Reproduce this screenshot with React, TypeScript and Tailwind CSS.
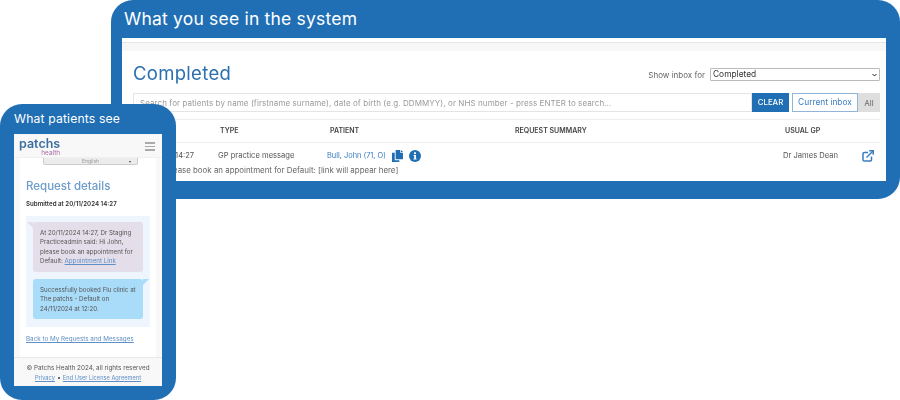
import React from "react";

const font = { fontFamily: '"Inter","Liberation Sans",sans-serif' };

function CopyIcon() {
  return (
    <svg width="11" height="12" viewBox="0 0 12 13" fill="#206fb5">
      <path d="M4 0h5v3h3v7H4z" />
      <path d="M0 3h3v8h5v2H0z" />
      <path d="M9.800 0 12 2.200H9.800z" />
    </svg>
  );
}

function InfoIcon() {
  return (
    <svg width="12" height="12" viewBox="0 0 12 12">
      <circle cx="6" cy="6" r="6" fill="#206fb5" />
      <rect x="5" y="2.300" width="2" height="1.800" fill="#fff" />
      <path d="M4.600 5h2.400v3.600h.6v1H4.500v-1h.7V6h-.6z" fill="#fff" />
    </svg>
  );
}

function ExternalIcon() {
  return (
    <svg width="12" height="12" viewBox="0 0 12 12" fill="none" stroke="#3a7cc0" strokeWidth="1.500">
      <path d="M9.500 6.500v3.200a1.300 1.300 0 0 1-1.300 1.300H2.300A1.300 1.300 0 0 1 1 9.700V3.800a1.300 1.300 0 0 1 1.300-1.300H6" />
      <path d="M4.500 7.500 11 1" />
      <path d="M7.200 .8h4v4" />
    </svg>
  );
}

function SystemWindow() {
  return (
    <div className="absolute left-[111px] top-0 w-[789px] h-[199px] bg-[#206fb5] rounded-[22px] flex flex-col pl-[11px] pr-[14px] pb-[18px]">
      <div className="h-[38px] pl-[2px] flex items-center text-white text-[17.5px] tracking-[0.2px]">What you see in the system</div>
      <div className="flex-1 bg-white flex flex-col text-[#555] text-[7.500px] blur-[0.3px]">
        <div className="h-[5px] border-b border-[#e6e6e6]" />
        <div className="h-[8px] bg-[#f7f7f7] shrink-0" />
        <div className="flex-1 pl-[11px] pr-[6px] flex flex-col">
          <div className="h-[42px] flex items-center justify-between pt-[5px]">
            <div className="text-[#2b6fb0] text-[18.500px] tracking-[0.3px] -mt-[2px]">Completed</div>
            <div className="flex items-center gap-[5px]">
              <span className="text-[#666] text-[8px]">Show inbox for</span>
              <div className="w-[170px] h-[13px] border border-[#bbb] rounded-[1px] flex items-center justify-between px-[2px] text-[#333] text-[8.400px]">
                <span>Completed</span>
                <svg width="5" height="4" viewBox="0 0 5 4" fill="none" stroke="#222" strokeWidth="1"><path d="M.5 1l2 2 2-2" /></svg>
              </div>
            </div>
          </div>
          <div className="h-[19px] flex items-stretch">
            <div className="flex-1 border border-[#e4e4e4] flex items-center pl-[6px] text-[#9a9a9a] text-[8px] tracking-[0.08px] whitespace-nowrap">
              Search for patients by name (firstname surname), date of birth (e.g. DDMMYY), or NHS number - press ENTER to search...
            </div>
            <div className="w-[37px] bg-[#206fb5] text-white flex items-center justify-center text-[7.800px] font-medium">CLEAR</div>
            <div className="ml-[3px] w-[66px] border border-[#8fb5d8] text-[#3a7cc0] flex items-center justify-center text-[8.400px]">Current inbox</div>
            <div className="w-[22px] bg-[#dedede] text-[#666] flex items-center justify-center text-[8px]">All</div>
          </div>
          <div className="mt-[7px] border-t border-[#eee] h-[24px] border-b grid grid-cols-[87px_110px_185px_270px_1fr] items-center text-[#444] font-semibold text-[7px]">
            <span>RECEIVED</span>
            <span>TYPE</span>
            <span>PATIENT</span>
            <span>REQUEST SUMMARY</span>
            <span>USUAL GP</span>
          </div>
          <div className="h-[24px] pt-[1px] grid grid-cols-[85px_109px_456px_79px_1fr] items-center text-[7.600px] text-[#555]">
            <span className="text-right pr-[24px] whitespace-nowrap">20/11/2024 14:27</span>
            <span>GP practice message</span>
            <span className="flex items-center gap-[6px] text-[#3a7cc0]">
              <span className="text-[7.400px]">Bull, John (71, O)</span>
              <CopyIcon />
              <InfoIcon />
            </span>
            <span>Dr James Dean</span>
            <ExternalIcon />
          </div>
          <div className="pl-[33px] text-[7.900px] leading-[7px] text-[#666] whitespace-nowrap">Please book an appointment for Default: [link will appear here]</div>
        </div>
      </div>
    </div>
  );
}

function PhoneWindow() {
  return (
    <div className="absolute left-0 top-[104px] w-[176px] h-[296px] bg-[#206fb5] rounded-[22px] flex flex-col px-[14px] pb-[14px]">
      <div className="h-[30px] flex items-center text-white text-[12.200px] tracking-[0.15px]">What patients see</div>
      <div className="flex-1 bg-[#f8f8f9] flex flex-col overflow-hidden blur-[0.45px]">
        <div className="h-[24px] shrink-0 flex items-start justify-between pl-[5px] pr-[7px] pt-[4px] bg-[#f8f8f9] border-b border-[#f0f0f0]">
          <div className="flex flex-col">
            <span className="text-[#3d6f9f] text-[12.500px] font-semibold leading-[12px]">patchs</span>
            <span className="text-[#a86ba8] text-[6.500px] leading-[6px] self-end">health</span>
          </div>
          <div className="flex flex-col gap-[2px] w-[10px] mt-[4px]">
            <div className="h-[1.500px] bg-[#aaa]" />
            <div className="h-[1.500px] bg-[#aaa]" />
            <div className="h-[1.500px] bg-[#aaa]" />
          </div>
        </div>
        <div className="mx-[6px] bg-white px-[6px] h-[199px] shrink-0 flex flex-col">
          <div className="ml-[17px] mr-[12px] h-[7px] bg-[#ececec] border border-t-0 border-[#ccc] rounded-b-[2px] flex items-center justify-center relative text-[5px] leading-[5px] text-[#999] overflow-hidden">
            <span className="absolute right-[6px] text-[#444] text-[4px]">▾</span>
            English
          </div>
          <div className="mt-[14px] text-[#6b9ccb] text-[11.500px] font-medium leading-[14px]">Request details</div>
          <div className="mt-[7px] text-[#333] text-[6.200px] font-semibold leading-[8px] whitespace-nowrap">Submitted at 20/11/2024 14:27</div>
          <div className="mt-[8px] bg-[#eff5fc] h-[111px] px-[7px] pt-[6px] flex flex-col gap-[7px] text-[#555] text-[6.200px] leading-[9.300px] whitespace-nowrap">
            <div className="relative bg-[#e4deea] rounded-[3px] h-[50px] px-[7px] pt-[6px]">
              <div className="absolute -left-[6px] top-0 w-0 h-0 border-t-[6px] border-t-[#e4deea] border-l-[6px] border-l-transparent" />
              At 20/11/2024 14:27, Dr Staging<br />
              Practiceadmin said: Hi John,<br />
              please book an appointment for<br />
              Default: <span className="text-[#5f8fc4] underline">Appointment Link</span>
            </div>
            <div className="relative bg-[#a9dcf9] rounded-[3px] h-[40px] px-[7px] pt-[6px]">
              <div className="absolute -right-[6px] top-0 w-0 h-0 border-t-[6px] border-t-[#a9dcf9] border-r-[6px] border-r-transparent" />
              Successfully booked Flu clinic at<br />
              The patchs - Default on<br />
              24/11/2024 at 12:20.
            </div>
          </div>
          <div className="mt-[8px] text-[#5f8fc4] underline text-[6.300px] leading-[8px] whitespace-nowrap">Back to My Requests and Messages</div>
        </div>
        <div className="flex-1 border-t border-[#e8e8e8] flex flex-col items-center pt-[6px] text-[6.300px] leading-[9px] text-[#555] whitespace-nowrap">
          <div>© Patchs Health 2024, all rights reserved</div>
          <div className="flex items-center gap-[3px] text-[#5f8fc4] text-[5.700px]">
            <span className="underline">Privacy</span>
            <span className="w-[2px] h-[2px] rounded-full bg-[#335]" />
            <span className="underline">End User License Agreement</span>
          </div>
        </div>
      </div>
    </div>
  );
}

export default function App() {
  return (
    <div className="relative w-[900px] h-[400px] bg-white overflow-hidden" style={font}>
      <SystemWindow />
      <PhoneWindow />
    </div>
  );
}
